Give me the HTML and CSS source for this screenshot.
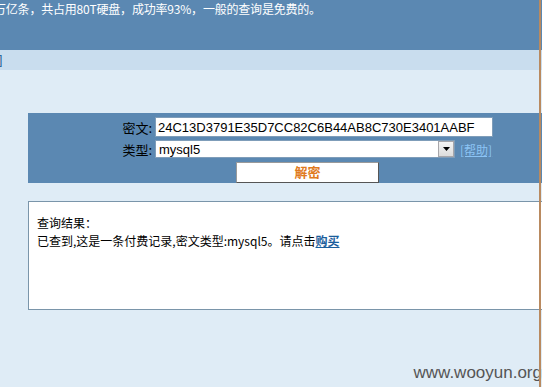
FILE: index.html
```html
<!DOCTYPE html>
<html lang="zh-CN">
<head>
  <meta charset="UTF-8" />
  <title>密文查询</title>
  <link rel="stylesheet" href="styles.css">
</head>
<body>

  <div class="top">
    <p class="notice">万亿条，共占用80T硬盘，成功率93%，一般的查询是免费的。</p>
  </div>
  <div class="subbar"><a href="#">]</a></div>

  <div class="main">
    <form class="panel">
      <label for="hash">密文:</label>
      <input type="text" id="hash" value="24C13D3791E35D7CC82C6B44AB8C730E3401AABF" />

      <label>类型:</label>
      <div class="type-row">
        <div class="select">
          <span>mysql5</span>
          <span class="arrow">
            <svg width="7" height="4" viewBox="0 0 7 4"><path d="M0 0h7L3.5 4z" fill="#000"/></svg>
          </span>
        </div>
        <a class="help" href="#">[帮助]</a>
      </div>

      <div class="btn-row">
        <button type="button">解密</button>
      </div>
    </form>

    <div class="result">
      <p>查询结果：</p>
      <p>已查到,这是一条付费记录,密文类型:mysql5。请点击<a href="#">购买</a></p>
    </div>
  </div>

  <div class="mark">www.wooyun.org</div>
  <div class="edge"></div>
</body>
</html>
```

FILE: styles.css
```css
body {
  margin: 0;
  background: #dfecf6;
  font-family: "Liberation Sans", Arial, "Noto Sans CJK SC", sans-serif;
  font-size: 12px;
  color: #000;
  height: 387px;
  overflow: hidden;
  position: relative;
}

p {
  margin: 0;
}

.top {
  height: 50px;
  background: #5b88b2;
  overflow: hidden;
}

.notice {
  margin-left: -6px;
  padding-top: 1px;
  color: #fff;
  font-size: 12px;
  line-height: 16px;
  letter-spacing: -0.2px;
  font-family: "Noto Sans CJK SC", sans-serif;
}

.subbar {
  height: 20px;
  background: #c9ddee;
  line-height: 20px;
}

.subbar a {
  color: #1d5f96;
  text-decoration: none;
  margin-left: -1px;
  font-size: 12px;
}

.main {
  padding: 43px 0 0 28px;
}

.panel {
  height: 70px;
  background: #5b88b2;
  box-sizing: border-box;
  padding-top: 4px;
  display: grid;
  grid-template-columns: 127px 1fr;
  row-gap: 2px;
  align-items: center;
}

.panel label {
  text-align: right;
  padding-right: 3px;
  font-family: "Noto Sans CJK SC", sans-serif;
  font-size: 13px;
  color: #000;
}

.panel input {
  width: 338px;
  height: 20px;
  box-sizing: border-box;
  border: 1px solid #7f9db9;
  padding: 0 2px;
  font-family: "Liberation Sans", Arial, sans-serif;
  font-size: 13px;
  color: #000;
  margin: 0;
}

.type-row {
  display: flex;
  align-items: center;
  gap: 5px;
}

.select {
  width: 300px;
  height: 18px;
  box-sizing: border-box;
  background: #fff;
  border: 1px solid #7f9db9;
  display: flex;
  align-items: center;
  justify-content: space-between;
  padding-left: 3px;
  font-size: 13px;
}

.arrow {
  width: 16px;
  height: 16px;
  box-sizing: border-box;
  border: 1px solid #a7a6aa;
  background: linear-gradient(#f4f4f4, #dcdcdc);
  display: flex;
  align-items: center;
  justify-content: center;
}

.help {
  color: #8cc4f5;
  font-family: "Noto Sans CJK SC", sans-serif;
  font-size: 12px;
}

.btn-row {
  grid-column: 2;
  padding-left: 81px;
}

.btn-row button {
  width: 143px;
  height: 21px;
  background: #fff;
  border: 1px solid #9a9a9a;
  border-right-color: #555;
  border-bottom-color: #555;
  color: #e07a1e;
  font-weight: bold;
  font-size: 13px;
  font-family: "Noto Sans CJK SC", sans-serif;
  padding: 0;
  line-height: 18px;
}

.result {
  margin-top: 18px;
  height: 109px;
  box-sizing: border-box;
  background: #fff;
  border: 1px solid #7a95aa;
  border-right: none;
  padding: 12px 8px;
  font-family: "Noto Sans CJK SC", sans-serif;
  font-size: 12px;
  line-height: 18px;
}

.result a {
  color: #1b5e9c;
  font-weight: bold;
}

.mark {
  position: absolute;
  right: 0;
  bottom: 4px;
  color: #555;
  font-size: 17px;
  font-family: "Liberation Sans", Arial, sans-serif;
}

.edge {
  position: absolute;
  top: 0;
  right: 1px;
  width: 2px;
  height: 100%;
  background: #b98a60;
}
```
